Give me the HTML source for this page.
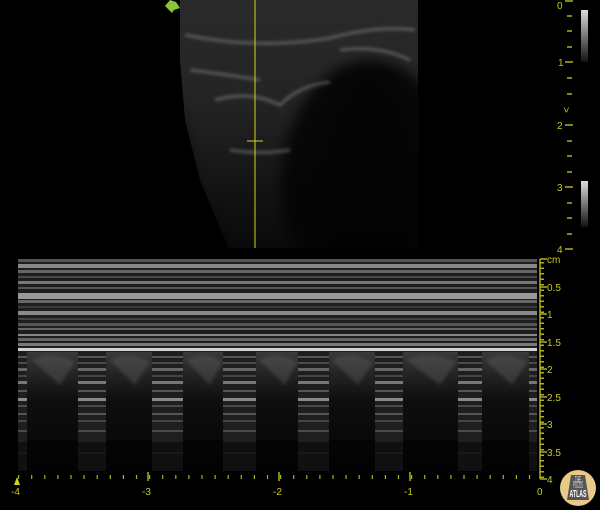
<!DOCTYPE html>
<html><head><style>
html,body{margin:0;padding:0;background:#000;width:600px;height:510px;overflow:hidden}
svg{display:block}
text{font-family:"Liberation Sans",sans-serif;fill:#c8c81e;font-size:10px}
</style></head><body>
<svg width="600" height="510" viewBox="0 0 600 510" xmlns="http://www.w3.org/2000/svg">
<defs>
<linearGradient id="bmv" x1="0" y1="0" x2="0" y2="1">
<stop offset="0" stop-color="#2a2a2a"/><stop offset="0.4" stop-color="#242424"/><stop offset="0.75" stop-color="#141414"/><stop offset="1" stop-color="#0a0a0a"/>
</linearGradient>
<radialGradient id="shadow" cx="0.5" cy="0.2" r="0.8">
<stop offset="0" stop-color="#000" stop-opacity="0.9"/><stop offset="0.7" stop-color="#000" stop-opacity="0.7"/><stop offset="1" stop-color="#000" stop-opacity="0"/>
</radialGradient>
<linearGradient id="bar" x1="0" y1="0" x2="0" y2="1"><stop offset="0" stop-color="#ddd"/><stop offset="1" stop-color="#111"/></linearGradient>
<linearGradient id="darkcol" x1="0" y1="0" x2="0" y2="1">
<stop offset="0" stop-color="#3a3a3a"/><stop offset="0.2" stop-color="#222"/><stop offset="0.4" stop-color="#0e0e0e"/><stop offset="1" stop-color="#060606"/>
</linearGradient>
<filter id="blur"><feGaussianBlur stdDeviation="6"/></filter>
<filter id="blur2"><feGaussianBlur stdDeviation="1.5"/></filter>
</defs>
<path d="M180 0 H418 V248 H228 L200 180 L185 120 L180 60 Z" fill="url(#bmv)"/>
<ellipse cx="370" cy="190" rx="90" ry="130" fill="url(#shadow)" filter="url(#blur)"/>
<path d="M180 100 L195 180 L228 248 H180 Z" fill="#000" opacity="0.6" filter="url(#blur)"/>
<g stroke="#9a9a9a" stroke-width="3" opacity="0.45" fill="none" filter="url(#blur2)">
<path d="M185 35 Q260 50 330 38 Q380 25 415 30"/>
<path d="M215 100 Q250 90 280 105 Q300 85 330 82"/>
<path d="M190 70 Q230 75 260 80"/>
<path d="M340 50 Q380 45 410 60"/>
<path d="M230 150 Q260 155 290 150"/>
</g>
<line x1="255" y1="0" x2="255" y2="248" stroke="#d4d41e" stroke-width="1"/>
<line x1="247" y1="141" x2="263" y2="141" stroke="#d4d41e" stroke-width="1"/>
<path d="M165 6 L170 0 L176 2 L180 8 L174 10 L172 13 L168 9 Z" fill="#8ac43a"/>
<g stroke="#b0b01e" stroke-width="1.5">
<line x1="565" y1="1" x2="573" y2="1"/><line x1="565" y1="62" x2="573" y2="62"/><line x1="565" y1="125" x2="573" y2="125"/><line x1="565" y1="187" x2="573" y2="187"/><line x1="565" y1="249" x2="573" y2="249"/>
<line x1="567" y1="16" x2="572" y2="16"/><line x1="567" y1="31" x2="572" y2="31"/><line x1="567" y1="47" x2="572" y2="47"/>
<line x1="567" y1="78" x2="572" y2="78"/><line x1="567" y1="94" x2="572" y2="94"/>
<line x1="567" y1="141" x2="572" y2="141"/><line x1="567" y1="156" x2="572" y2="156"/><line x1="567" y1="172" x2="572" y2="172"/>
<line x1="567" y1="203" x2="572" y2="203"/><line x1="567" y1="218" x2="572" y2="218"/><line x1="567" y1="234" x2="572" y2="234"/>
</g>
<text x="557" y="9">0</text><text x="558" y="66">1</text><text x="557" y="129">2</text><text x="557" y="191">3</text><text x="557" y="253">4</text>
<text x="565" y="115" font-size="9" transform="rotate(90 568 110)">&gt;</text>
<rect x="581" y="10" width="7" height="52" fill="url(#bar)"/>
<rect x="581" y="181" width="7" height="46" fill="url(#bar)"/>
<rect x="18" y="259" width="519" height="212" fill="#1e1e1e"/>
<g>
<rect x="18" y="259" width="519" height="3" fill="#555"/>
<rect x="18" y="264" width="519" height="4" fill="#888"/>
<rect x="18" y="270" width="519" height="3" fill="#666"/>
<rect x="18" y="276" width="519" height="2" fill="#4a4a4a"/>
<rect x="18" y="281" width="519" height="3" fill="#777"/>
<rect x="18" y="287" width="519" height="2" fill="#555"/>
<rect x="18" y="293" width="519" height="6" fill="#9a9a9a"/>
<rect x="18" y="300" width="519" height="3" fill="#666"/>
<rect x="18" y="306" width="519" height="2" fill="#3a3a3a"/>
<rect x="18" y="311" width="519" height="4" fill="#8a8a8a"/>
<rect x="18" y="318" width="519" height="2" fill="#444"/>
<rect x="18" y="323" width="519" height="3" fill="#555"/>
<rect x="18" y="328" width="519" height="2" fill="#666"/>
<rect x="18" y="334" width="519" height="2" fill="#888"/>
<rect x="18" y="338" width="519" height="3" fill="#666"/>
<rect x="18" y="343" width="519" height="3" fill="#7a7a7a"/>
<rect x="18" y="348" width="519" height="3" fill="#d0d0d0"/>
</g>
<g>
<rect x="18" y="356" width="519" height="2" fill="#555"/>
<rect x="18" y="362" width="519" height="2" fill="#4a4a4a"/>
<rect x="18" y="368" width="519" height="3" fill="#666"/>
<rect x="18" y="375" width="519" height="2" fill="#444"/>
<rect x="18" y="381" width="519" height="3" fill="#777"/>
<rect x="18" y="390" width="519" height="2" fill="#555"/>
<rect x="18" y="398" width="519" height="3" fill="#8a8a8a"/>
<rect x="18" y="405" width="519" height="2" fill="#4a4a4a"/>
<rect x="18" y="413" width="519" height="2" fill="#555"/>
<rect x="18" y="420" width="519" height="2" fill="#444"/>
<rect x="18" y="430" width="519" height="2" fill="#4a4a4a"/>
<rect x="18" y="440" width="519" height="2" fill="#3a3a3a"/>
<rect x="18" y="452" width="519" height="2" fill="#2e2e2e"/>
</g>
<g fill="url(#darkcol)">
<rect x="27" y="352" width="51" height="120"/><rect x="106" y="352" width="46" height="120"/><rect x="183" y="352" width="40" height="120"/>
<rect x="256" y="352" width="42" height="120"/><rect x="329" y="352" width="46" height="120"/><rect x="403" y="352" width="55" height="120"/><rect x="482" y="352" width="47" height="120"/>
</g>
<g fill="#666" opacity="0.35" filter="url(#blur2)">
<path d="M32 360 Q50 350 75 362 L60 385 Z"/><path d="M110 360 Q128 350 150 362 L135 385 Z"/><path d="M186 360 Q205 350 222 362 L210 385 Z"/>
<path d="M259 360 Q278 350 297 362 L285 385 Z"/><path d="M332 360 Q350 350 373 362 L358 385 Z"/><path d="M406 360 Q430 350 456 362 L440 385 Z"/><path d="M485 360 Q505 350 527 362 L512 385 Z"/>
</g>
<rect x="18" y="440" width="519" height="32" fill="#000" opacity="0.45"/>
<g stroke="#b0b01e" stroke-width="1.5">
<line x1="540" y1="259" x2="540" y2="479"/>
<line x1="540" y1="259" x2="547" y2="259"/><line x1="540" y1="287" x2="547" y2="287"/><line x1="540" y1="314" x2="547" y2="314"/><line x1="540" y1="342" x2="547" y2="342"/><line x1="540" y1="369" x2="547" y2="369"/><line x1="540" y1="397" x2="547" y2="397"/><line x1="540" y1="424" x2="547" y2="424"/><line x1="540" y1="452" x2="547" y2="452"/><line x1="540" y1="479" x2="547" y2="479"/>
</g>
<g stroke="#b0b01e" stroke-dasharray="1.5 4" stroke-width="4"><line x1="542" y1="262" x2="542" y2="478"/></g>
<text x="547" y="263" font-size="9">cm</text><text x="547" y="291">0.5</text><text x="547" y="318">1</text><text x="547" y="346">1.5</text><text x="547" y="373">2</text><text x="547" y="401">2.5</text><text x="547" y="428">3</text><text x="547" y="456">3.5</text><text x="547" y="483">4</text>
<g stroke="#b0b01e" stroke-dasharray="1.2 11.9" stroke-width="4"><line x1="18" y1="477" x2="540" y2="477"/></g>
<g stroke="#b0b01e" stroke-width="1.5">
<line x1="148" y1="472" x2="148" y2="481"/><line x1="279" y1="472" x2="279" y2="481"/><line x1="410" y1="472" x2="410" y2="481"/>
</g>
<path d="M14 485 L17 477 L20 485 Z" fill="#d4d41e"/>
<text x="11" y="495">-4</text><text x="142" y="495">-3</text><text x="273" y="495">-2</text><text x="404" y="495">-1</text><text x="537" y="495">0</text>
<circle cx="578" cy="488" r="18" fill="#e8c98a"/>
<path d="M571 475 L585 475 L589 500 L567 500 Z" fill="#555"/>
<text x="578" y="497" font-size="5" textLength="17" lengthAdjust="spacingAndGlyphs" text-anchor="middle" style="fill:#fff;font-weight:bold">ATLAS</text>
<text x="578" y="488" font-size="3" textLength="10" lengthAdjust="spacingAndGlyphs" text-anchor="middle" style="fill:#ddd">POCUS</text>
<text x="578" y="483" font-size="3" textLength="6" lengthAdjust="spacingAndGlyphs" text-anchor="middle" style="fill:#ddd">THE</text>
</svg>
</body></html>
